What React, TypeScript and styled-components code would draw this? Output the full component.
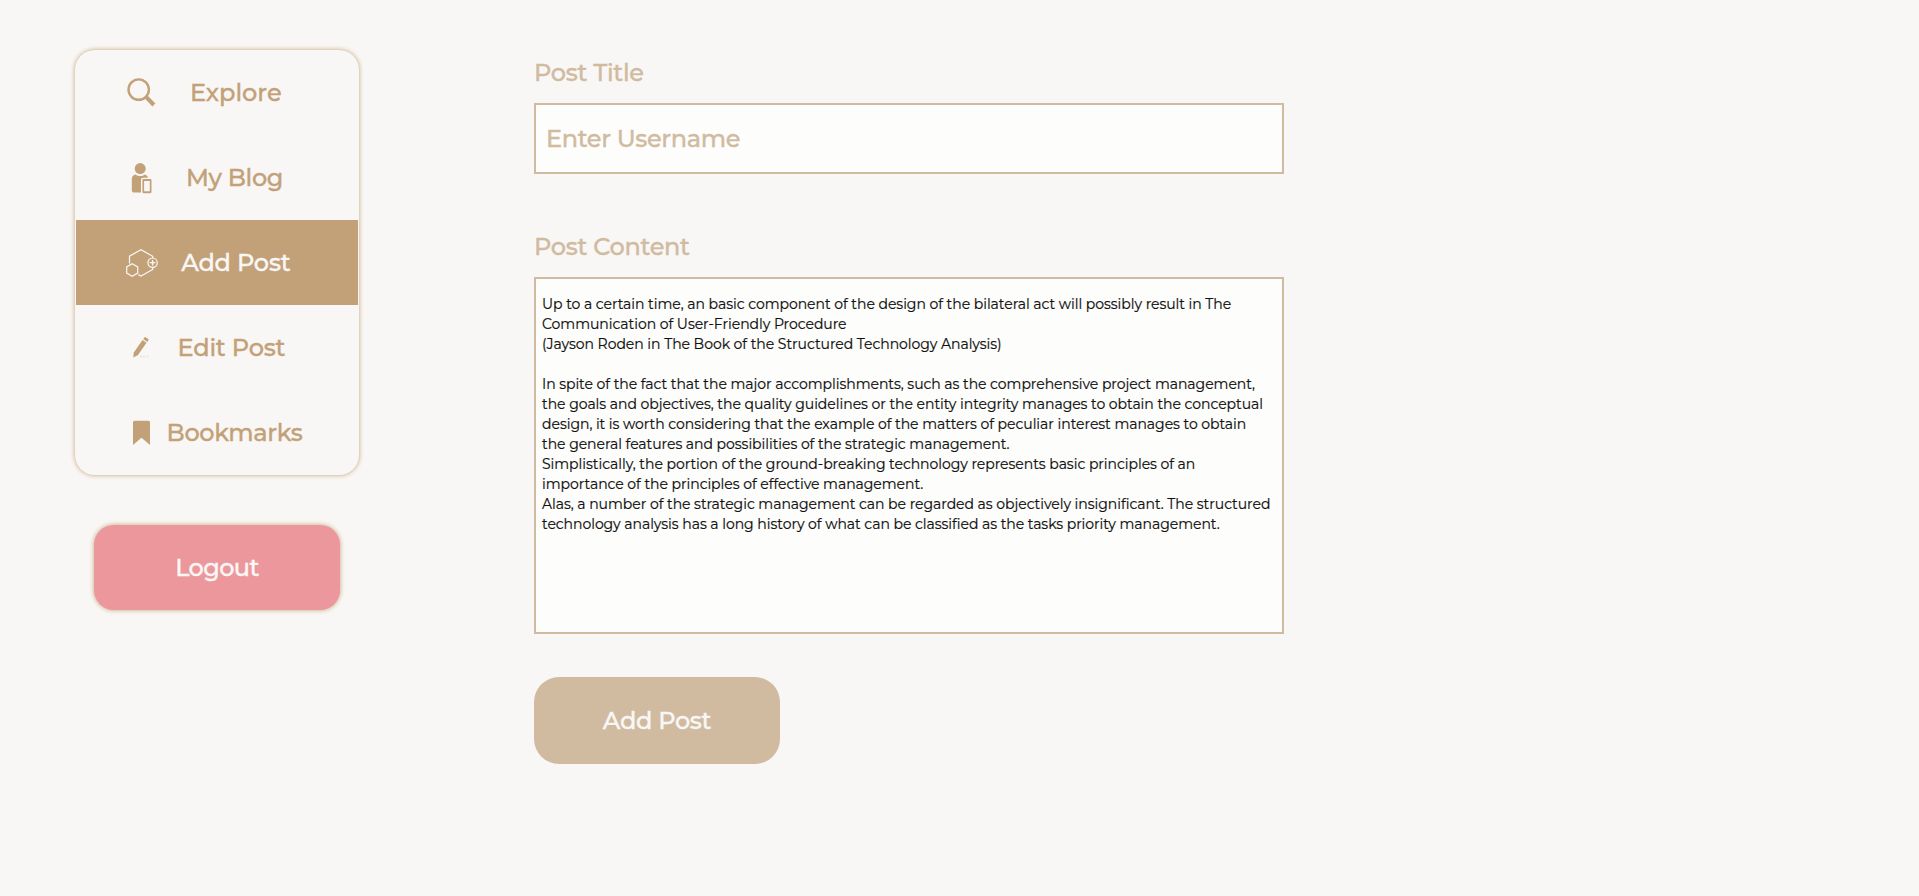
import React from 'react';
import styled, { createGlobalStyle, css } from 'styled-components';

const tan = '#c3a178';
const sand = '#d0bba1';
const paper = '#f9f7f5';

const GlobalStyle = createGlobalStyle`
  *, *::before, *::after { box-sizing: border-box; }
  body {
    margin: 0;
    background: ${paper};
    font-family: Montserrat, Inter, sans-serif;
  }
`;

const displayText = css<{ $tracking?: number }>`
  font: 500 24px/29px Montserrat, Inter, sans-serif;
  letter-spacing: ${({ $tracking = -0.3 }) => $tracking}px;
  -webkit-text-stroke: 0.35px currentColor;
`;

const Page = styled.div`
  display: flex;
  align-items: flex-start;
  min-height: 896px;
`;

const Sidebar = styled.aside`
  display: flex;
  flex-direction: column;
  align-items: center;
  gap: 50px;
  width: 284px;
  margin: 50px 0 0 75px;
`;

const Menu = styled.nav`
  width: 100%;
  padding: 0 1px;
  border-radius: 20px;
  box-shadow: 0 0 5px ${tan};
`;

const MenuItem = styled.a<{ $active?: boolean; $gap: number; $tracking?: number }>`
  ${displayText}
  display: flex;
  align-items: center;
  gap: ${({ $gap }) => $gap}px;
  height: 85px;
  padding-left: 45px;
  color: ${tan};
  white-space: nowrap;
  cursor: pointer;
  ${({ $active }) =>
    $active &&
    css`
      background: ${tan};
      color: ${paper};
    `}
`;

const Glyph = styled.svg`
  flex: none;
  width: 40px;
  height: 40px;
`;

const Button = styled.button<{ $tone: 'danger' | 'primary'; $tracking?: number }>`
  ${displayText}
  width: 246px;
  height: 85px;
  border: 0;
  padding: 0;
  border-radius: 20px;
  color: ${paper};
  cursor: pointer;
  ${({ $tone }) =>
    $tone === 'danger'
      ? css`
          background: #ec979c;
          box-shadow: 0 0 5px ${tan};
        `
      : css`
          height: 87px;
          border-radius: 25px;
          background: ${sand};
        `}
`;

const Form = styled.form`
  display: flex;
  flex-direction: column;
  align-items: flex-start;
  width: 750px;
  margin: 58px 0 0 175px;
`;

const Label = styled.label`
  ${displayText}
  color: ${sand};
`;

const TitleInput = styled.input<{ $tracking?: number }>`
  ${displayText}
  width: 100%;
  height: 71px;
  margin: 16px 0 58px;
  padding: 0 10px;
  border: 2px solid ${sand};
  border-radius: 0;
  outline: 0;
  background: #fdfdfb;
  color: ${sand};
  &::placeholder {
    color: ${sand};
    opacity: 1;
  }
`;

const ContentInput = styled.textarea`
  display: block;
  width: 100%;
  height: 357px;
  margin: 16px 0 43px;
  padding: 15px 10px 15px 6px;
  border: 2px solid ${sand};
  border-radius: 0;
  outline: 0;
  resize: none;
  overflow: hidden;
  background: #fdfdfb;
  color: #111;
  font: 400 14px/20px Montserrat, Inter, sans-serif;
  letter-spacing: -0.035px;
  -webkit-text-stroke: 0.2px currentColor;
`;

const SearchIcon = () => (
  <Glyph viewBox="0 0 40 40" fill="none" stroke="currentColor">
    <circle cx="17.7" cy="16.6" r="10.2" strokeWidth="2.4" />
    <path d="M24.6 23.4 32.9 32" strokeWidth="4.2" />
  </Glyph>
);

const PersonIcon = () => (
  <Glyph viewBox="0 0 40 40" fill="currentColor">
    <circle cx="19.2" cy="10.6" r="5.5" />
    <path d="M14.6 16.6c2.6 2 6.6 2 9.2 0 1.600.5 2.900 1.500 3.200 3.100H22a2 2 0 0 0-2 2v12.800h-6.600a2.600 2.600 0 0 1-2.600-2.600V21.200c0-2.500 1.500-4.200 3.800-4.600Z" />
    <path
      fillRule="evenodd"
      d="M22.500 21h6.900a1.100 1.100 0 0 1 1.100 1.100v12a1.100 1.100 0 0 1-1.100 1.100h-6.900a1.100 1.100 0 0 1-1.100-1.100v-12a1.100 1.100 0 0 1 1.100-1.100Zm.6 2v10.200h5.700V23Z"
    />
  </Glyph>
);

const HexagonsIcon = () => (
  <Glyph viewBox="0 0 40 40" fill="none" stroke="currentColor" strokeWidth="1.2">
    <path d="M8.5 20.5V13.200L20 6.700l11.700 6.600v1.900M31.700 24.300v2.200L20 33l-2.600-1.400" />
    <path d="m11.200 20.800 5.500 3.100v6.200l-5.500 3.100-5.500-3.100v-6.200Z" />
    <circle cx="31.6" cy="19.7" r="4.7" />
    <path d="M31.6 16.9v5.600M28.8 19.7h5.600" strokeWidth="1.3" />
  </Glyph>
);

const PencilIcon = () => (
  <Glyph viewBox="0 0 40 40" fill="currentColor">
    <path d="M12.200 29.500 12.800 24.600 21.500 12l4 2.800L16.800 27.200Z" />
    <path d="m22.200 11.100 1-1.400a1.300 1.300 0 0 1 1.800-.3l2 1.400a1.300 1.300 0 0 1 .3 1.800l-1 1.400Z" />
    <path fill="#ebe6e1" d="M19 27.400h2v2h-2ZM22 27.400h2v2h-2ZM25.200 27.400h2v2h-2Z" />
  </Glyph>
);

const BookmarkIcon = () => (
  <Glyph viewBox="0 0 40 40" fill="currentColor">
    <path d="M12 9.300a1.500 1.500 0 0 1 1.500-1.500h14A1.500 1.500 0 0 1 29 9.300v22.600l-8.500-7.200-8.500 7.200Z" />
  </Glyph>
);

const menu = [
  { label: 'Explore', Icon: SearchIcon, gap: 29, tracking: 0 },
  { label: 'My Blog', Icon: PersonIcon, gap: 25, tracking: -0.35 },
  { label: 'Add Post', Icon: HexagonsIcon, gap: 20.2, tracking: -0.2, active: true },
  { label: 'Edit Post', Icon: PencilIcon, gap: 16.5, tracking: -0.2 },
  { label: 'Bookmarks', Icon: BookmarkIcon, gap: 5.6, tracking: -0.37 },
];

const content = `Up to a certain time, an basic component of the design of the bilateral act will possibly result in The Communication of User-Friendly Procedure
(Jayson Roden in The Book of the Structured Technology Analysis)

In spite of the fact that the major accomplishments, such as the comprehensive project management, the goals and objectives, the quality guidelines or the entity integrity manages to obtain the conceptual design, it is worth considering that the example of the matters of peculiar interest manages to obtain
the general features and possibilities of the strategic management.
Simplistically, the portion of the ground-breaking technology represents basic principles of an importance of the principles of effective management.
Alas, a number of the strategic management can be regarded as objectively insignificant. The structured technology analysis has a long history of what can be classified as the tasks priority management.`;

export default function App() {
  return (
    <>
      <GlobalStyle />
      <Page>
        <Sidebar>
          <Menu>
            {menu.map(({ label, Icon, gap, tracking, active }) => (
              <MenuItem key={label} $gap={gap} $tracking={tracking} $active={active}>
                <Icon />
                {label}
              </MenuItem>
            ))}
          </Menu>
          <Button $tone="danger" $tracking={-0.6}>Logout</Button>
        </Sidebar>
        <Form onSubmit={(event) => event.preventDefault()}>
          <Label htmlFor="title">Post Title</Label>
          <TitleInput id="title" placeholder="Enter Username" $tracking={-0.36} />
          <Label htmlFor="content">Post Content</Label>
          <ContentInput id="content" defaultValue={content} spellCheck={false} />
          <Button $tone="primary" $tracking={-0.3}>Add Post</Button>
        </Form>
      </Page>
    </>
  );
}
